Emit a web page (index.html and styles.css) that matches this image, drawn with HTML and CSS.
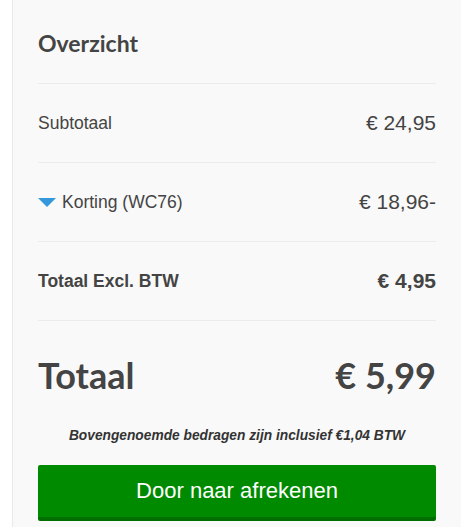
FILE: index.html
```html
<!DOCTYPE html>
<html>
<head>
	<meta charset="utf-8">
	<title>Overzicht</title>
	<link rel="stylesheet" href="styles.css">
</head>
<body>
	<div class="page">
		<div class="summary">
			<h2 class="summary-title">Overzicht</h2>
			<div class="row">
				<span class="label">Subtotaal</span>
				<span class="amount">€ 24,95</span>
			</div>
			<div class="row">
				<span class="label"><i class="caret"></i>Korting (WC76)</span>
				<span class="amount">€ 18,96-</span>
			</div>
			<div class="row row-bold">
				<span class="label">Totaal Excl. BTW</span>
				<span class="amount">€ 4,95</span>
			</div>
			<div class="total">
				<span>Totaal</span>
				<span>€ 5,99</span>
			</div>
			<p class="note">Bovengenoemde bedragen zijn inclusief €1,04 BTW</p>
			<a href="#" class="btn-checkout">Door naar afrekenen</a>
		</div>
	</div>
</body>
</html>
```

FILE: styles.css
```css
*{
	margin: 0;
	padding: 0;
	box-sizing: border-box;
}
body{
	background: #fff;
	font-family: "Liberation Sans", Arial, sans-serif;
	color: #444;
}
.page{
	padding-left: 12px;
	height: 527px;
	overflow: hidden;
}
.summary{
	background: #f9f9f9;
	border-left: 1px solid #e9e9e9;
	padding: 0 25px;
	min-height: 560px;
}
.summary-title{
	font-family: "Lato", sans-serif;
	font-weight: bold;
	font-size: 23px;
	line-height: 30px;
	padding: 28px 0 25px;
	border-bottom: 1px solid #ececec;
}
.row{
	display: flex;
	justify-content: space-between;
	align-items: center;
	padding: 29px 0;
	border-bottom: 1px solid #ececec;
	line-height: 20px;
}
.label{
	display: flex;
	align-items: center;
	font-size: 17.5px;
}
.amount{
	font-size: 21px;
}
.row-bold .label,
.row-bold .amount{
	font-weight: bold;
}
.caret{
	width: 0;
	height: 0;
	margin-right: 6px;
	border-left: 9px solid transparent;
	border-right: 9px solid transparent;
	border-top: 9px solid #3498db;
}
.total{
	display: flex;
	justify-content: space-between;
	font-family: "Lato", sans-serif;
	font-weight: bold;
	font-size: 36px;
	line-height: 44px;
	padding: 32px 0 30px;
}
.note{
	text-align: center;
	font-size: 13.75px;
	line-height: 18px;
	font-weight: bold;
	font-style: italic;
	color: #333;
	margin-bottom: 20px;
}
.btn-checkout{
	display: block;
	text-align: center;
	background: #008a00;
	border-bottom: 4px solid #006f00;
	border-radius: 2px;
	color: #fff;
	font-size: 22px;
	line-height: 52px;
	text-decoration: none;
}
```
